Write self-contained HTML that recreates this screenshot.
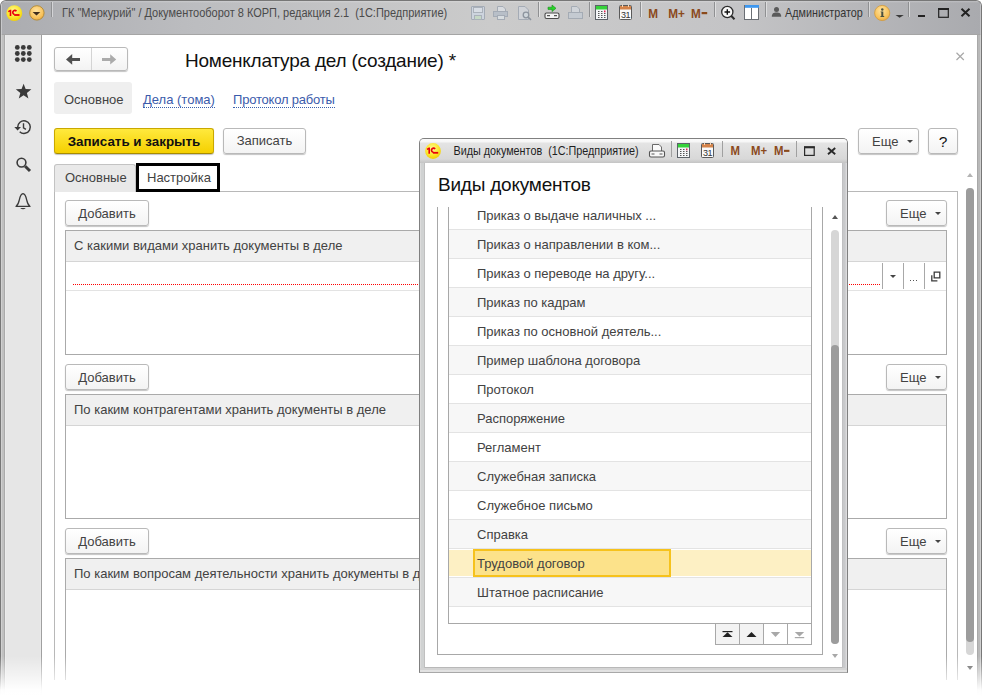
<!DOCTYPE html>
<html><head><meta charset="utf-8">
<style>
*{box-sizing:border-box;margin:0;padding:0}
html,body{width:982px;height:696px;overflow:hidden;background:#fff;font-family:"Liberation Sans",sans-serif;color:#333}
.a{position:absolute}
#win{left:0;top:0;width:982px;height:720px;border:1px solid #777;border-bottom:none;border-radius:6px 6px 0 0;background:linear-gradient(90deg,#d0d0d0 0 1px,#c0c0c0 1px 3px,#aaa 3px 4px,#fff 4px calc(100% - 4px),#a8a8a8 calc(100% - 4px) calc(100% - 3px),#b8b8b8 calc(100% - 3px) calc(100% - 1px),#d0d0d0 calc(100% - 1px));overflow:hidden}
#tb{left:-1px;top:-1px;width:982px;height:35px;background:linear-gradient(#a5a5a5,#a5a5a5) bottom/100% 1px no-repeat,linear-gradient(rgba(255,255,255,.35),rgba(255,255,255,0) 3px),linear-gradient(90deg,#abacb0,#bcbdc0 20%,#cbcbcb 50%,#c4c4c6 75%,#a9aaae);box-shadow:inset 2px 0 0 rgba(255,255,255,.35),inset -2px 0 0 rgba(255,255,255,.3)}
#client{left:4px;top:34px;width:972px;height:700px;background:#fff}
#side{left:0;top:0;width:37px;height:700px;background:#e6e6e6;border-left:1px solid #ececec;border-right:1px solid #a0a0a0;box-shadow:inset -1px 0 0 #eaeaea}
.sep{width:1px;height:16px;top:4px;background:#8e8f92;box-shadow:1px 0 0 #d6d7da}
.tt{font-size:11px;color:#474747;white-space:nowrap}
.btn{border:1px solid #b9b9b9;border-radius:3px;background:linear-gradient(#fff,#f3f3f3);box-shadow:0 1px 1px #c4c4c4;font-size:13px;color:#424242;text-align:center;white-space:nowrap}
.txt{font-size:13px;color:#424242;white-space:nowrap}
.tbl{border:1px solid #aaa;background:#fff}
.thd{background:#f0f0f0;border-bottom:1px solid #d5d5d5}
.tri{width:0;height:0;border-left:3px solid transparent;border-right:3px solid transparent;border-top:3px solid #444}
.lnk{color:#3c61ad;border-bottom:1px dotted #3c61ad}

#dlg{left:419px;top:138px;width:429px;height:535px;border:1px solid #808080;border-bottom-color:#a8a8a8;border-radius:5px 5px 0 0;background:linear-gradient(#b8b8b8,#b8b8b8) 5px 528px/417px 1px no-repeat,linear-gradient(#d4d4d4 0 2px,#e2e2e2 2px 4px) 0 529px/100% 4px no-repeat,linear-gradient(90deg,#dcdcdc 0 1px,#d0d2d2 1px 4px,#c0c0c0 4px 5px,#fff 5px 422px,#c0c0c2 422px 423px,#c8c9cb 423px 425px,#d0d0d2 425px 426px,#dcdcde 426px);overflow:hidden}
#dtb{left:0;top:0;width:427px;height:24px;background:linear-gradient(#fbfbfb 0,#f6f6f6 3px,#e4e4e4 4px,#d8d8d8 20px,#c4c4c4 24px)}
#dcl{left:5px;top:24px;width:417px;height:504px;background:#fff}
#dscroll{left:0;top:44px;width:417px;height:460px;overflow:hidden}
#list{left:23px;top:0;width:364px;height:416px;overflow:hidden;border-left:1px solid #a8a8a8;border-right:1px solid #a8a8a8}
.row{left:0;width:362px;height:29px;border-bottom:1px solid #e3e3e3}
#fade{left:0;top:656px;width:982px;height:40px;background:linear-gradient(rgba(255,255,255,0),rgba(255,255,255,.55) 20px,rgba(255,255,255,.97) 34px,#fff)}
</style></head><body>
<div id="win" class="a">
  <div id="tb" class="a">
  </div>
  <div id="client" class="a">
    <div id="side" class="a"></div>
  </div>
</div>


<!-- title bar items -->
<svg class="a" style="left:0;top:0" width="982" height="34" viewBox="0 0 982 34">
  <defs>
    <radialGradient id="gy" cx="0.45" cy="0.35" r="0.7"><stop offset="0" stop-color="#fffb9a"/><stop offset="0.6" stop-color="#fbe62a"/><stop offset="1" stop-color="#f0c800"/></radialGradient>
    <radialGradient id="go" cx="0.45" cy="0.35" r="0.7"><stop offset="0" stop-color="#ffe3a0"/><stop offset="0.7" stop-color="#f8c25a"/><stop offset="1" stop-color="#e9a640"/></radialGradient>
  </defs>
  <!-- 1C logo -->
  <g id="logo1c">
  <circle cx="14.3" cy="13.2" r="7.9" fill="url(#gy)"/>
  <path d="M8 11 L10.1 9.8 H11.3 V15.9 H9.7 V11.7 L8.5 12.3 Z" fill="#e8000c"/>
  <path d="M16.4 11.2 A2 2 0 1 0 14.6 14.4" fill="none" stroke="#e8000c" stroke-width="1.7"/>
  <rect x="14.2" y="14.1" width="5.3" height="1.8" fill="#e8000c"/>
  </g>
  <!-- dropdown circle -->
  <circle cx="36.9" cy="12.9" r="7.2" fill="url(#go)" stroke="#b58e3c" stroke-width="1"/>
  <path d="M32.6 11.9 H40.3 L36.5 15.6 Z" fill="#3e2c1c"/>
  <!-- separators -->
  <g fill="#8f9092" style="filter:drop-shadow(1px 0 0 rgba(255,255,255,.45))">
    <rect x="51" y="2" width="1" height="15"/>
    <rect x="538" y="2" width="1" height="15"/>
    <rect x="589" y="2" width="1" height="15"/>
    <rect x="640" y="2" width="1" height="15"/>
    <rect x="714" y="2" width="1" height="15"/>
    <rect x="765" y="2" width="1" height="15"/>
    <rect x="868" y="2" width="1" height="15"/>
    <rect x="908" y="2" width="1" height="15"/>
  </g>
  <!-- disabled save -->
  <g stroke="#a4abb5" fill="#cdd4de" stroke-width="1">
    <rect x="471.5" y="6.5" width="13" height="13" rx="0.5"/>
    <rect x="473.5" y="7.5" width="9" height="5" fill="#d8dde4" stroke="#aab1ba"/>
    <rect x="474.5" y="15.5" width="7" height="4" fill="#c5d8c5" stroke="#aab1ba"/>
  </g>
  <!-- disabled print -->
  <g stroke="#a4abb5" fill="#d2d6dc" stroke-width="1">
    <path d="M497.5 6.5 H503 L505.5 9 V11.5 H497.5 Z" fill="#d8dbdf"/>
    <rect x="493.5" y="11.5" width="14" height="5" fill="#b8bfc8"/>
    <rect x="497.5" y="15.5" width="7" height="4" fill="#d8dde0"/>
  </g>
  <!-- disabled preview -->
  <g stroke="#a4abb5" fill="none" stroke-width="1">
    <path d="M518.5 6.5 H525 L528.5 10 V19.5 H518.5 Z" fill="#d0d3d8"/>
    <circle cx="526" cy="15" r="2.8" fill="#cfd6dc" stroke="#8c949e" stroke-width="1.3"/>
    <path d="M528 17 L531 19.8" stroke="#8c949e" stroke-width="1.6"/>
  </g>
  <!-- link with green arrow -->
  <path d="M548 7.2 H552 V5 L556 8.3 L552 11.6 V9.4 H548 Z" fill="#27d42a" stroke="#1a8a1a" stroke-width="0.6"/>
  <rect x="545" y="13" width="14" height="5.5" rx="1.5" fill="#f4f4f4" stroke="#4a4a4a" stroke-width="1.1"/>
  <path d="M547 15.7 H550 M554 15.7 H557" stroke="#555" stroke-width="1.3"/>
  <!-- disabled print to file -->
  <g stroke="#a4abb4" fill="#d0d4d9" stroke-width="1">
    <path d="M571.5 6.5 H577 L579.5 9 V12.5 H571.5 Z"/>
    <rect x="568.5" y="12.5" width="14" height="6" fill="#c4cad1"/>
  </g>
  <!-- calculator -->
  <rect x="595.5" y="5.5" width="12" height="14" fill="#f4f6f8" stroke="#5c6268" stroke-width="1"/>
  <rect x="596" y="6" width="11" height="3.5" fill="#36d23a"/>
  <g fill="#555">
    <rect x="598" y="11" width="1.5" height="1"/><rect x="601" y="11" width="1.5" height="1"/>
    <rect x="598" y="13" width="1.5" height="1"/><rect x="601" y="13" width="1.5" height="1"/><rect x="604" y="13" width="1.5" height="1"/>
    <rect x="598" y="15" width="1.5" height="1"/><rect x="601" y="15" width="1.5" height="1"/><rect x="604" y="15" width="1.5" height="1"/>
    <rect x="598" y="17" width="1.5" height="1"/><rect x="601" y="17" width="1.5" height="1"/><rect x="604" y="17" width="1.5" height="1"/>
  </g>
  <rect x="604" y="10.5" width="1.5" height="1.8" fill="#e82050"/>
  <!-- calendar -->
  <rect x="619.5" y="5.5" width="12" height="14" rx="1" fill="#fafafa" stroke="#5a5a5a" stroke-width="1"/>
  <rect x="620" y="6" width="11" height="3.5" fill="#d4834a"/>
  <rect x="622" y="4.5" width="1" height="2.5" fill="#f0d8c0"/><rect x="628" y="4.5" width="1" height="2.5" fill="#f0d8c0"/>
  <text x="625.6" y="18.2" font-family="Liberation Sans" font-size="9" text-anchor="middle" fill="#333" letter-spacing="-0.3">31</text>
  <!-- M M+ M- -->
  <g font-family="Liberation Sans" font-weight="bold" font-size="12" fill="#8b4a1c">
    <text transform="translate(648.2 17.8) scale(0.98 1.1)">M</text>
    <text transform="translate(668.3 17.8) scale(0.98 1.1)">M+</text>
    <text transform="translate(691 17.8) scale(0.98 1.1)">M</text>
    <rect x="701.6" y="12" width="5.6" height="2.2"/>
  </g>
  <!-- zoom -->
  <circle cx="727.3" cy="12" r="5.6" fill="#f8f8f8" stroke="#2c2c2c" stroke-width="1.3"/>
  <path d="M724.5 12 H730.1 M727.3 9.2 V14.8" stroke="#111" stroke-width="1.4"/>
  <path d="M731.3 16 L734.5 19.2" stroke="#2c2c2c" stroke-width="2"/>
  <!-- panel -->
  <rect x="744.5" y="5.5" width="14" height="14" fill="#fff" stroke="#6a6e74" stroke-width="1"/>
  <rect x="745" y="5" width="14" height="2.8" fill="#3d97ef"/>
  <rect x="751" y="8" width="1" height="11.5" fill="#6a6e74"/>
  <!-- user -->
  <circle cx="776.5" cy="9.6" r="2.5" fill="#5a5a5a"/>
  <path d="M771.8 16.8 C771.8 13.5 773.5 12.6 776.5 12.6 C779.5 12.6 781.2 13.5 781.2 16.8 Z" fill="#5a5a5a"/>
  <text transform="translate(785 16.9) scale(1 1.12)" font-family="Liberation Sans" font-size="10.8" fill="#333">Администратор</text>
  <!-- info -->
  <circle cx="882.2" cy="13" r="7.6" fill="url(#go)" stroke="#d39a3a" stroke-width="0.8"/>
  <circle cx="882.3" cy="9.4" r="1.25" fill="#4a5040"/>
  <path d="M880.6 11.4 H883.3 V16 H884.2 V17 H880.5 V16 H881.3 V12.3 H880.6 Z" fill="#4a5040"/>
  <path d="M895.5 15 H903.8 L899.6 17.8 Z" fill="#3a3a3a"/>
  <!-- window buttons -->
  <rect x="918" y="15" width="7" height="2" fill="#222"/>
  <rect x="938.7" y="8.7" width="9.6" height="8.6" fill="none" stroke="#222" stroke-width="1.2"/>
  <rect x="938" y="8" width="11" height="2" fill="#222"/>
  <path d="M961.5 8.8 L969.5 16.2 M969.5 8.8 L961.5 16.2" stroke="#222" stroke-width="2"/>
  <text transform="translate(62 16.6) scale(1 1.13)" x="0" y="0" font-family="Liberation Sans" font-size="11" fill="#4a4a4a">ГК "Меркурий" / Документооборот 8 КОРП, редакция 2.1&#160; (1С:Предприятие)</text>
</svg>


<!-- sidebar icons -->
<svg class="a" style="left:0;top:34px" width="42" height="190" viewBox="0 34 42 190">
  <g fill="#3a3a3a">
    <circle cx="17.3" cy="47.4" r="2.4"/><circle cx="23.3" cy="47.4" r="2.4"/><circle cx="29.3" cy="47.4" r="2.4"/>
    <circle cx="17.3" cy="53.5" r="2.4"/><circle cx="23.3" cy="53.5" r="2.4"/><circle cx="29.3" cy="53.5" r="2.4"/>
    <circle cx="17.3" cy="59.6" r="2.4"/><circle cx="23.3" cy="59.6" r="2.4"/><circle cx="29.3" cy="59.6" r="2.4"/>
  </g>
  <path d="M23.60 83.70 L25.63 89.11 L31.40 89.37 L26.88 92.97 L28.42 98.53 L23.60 95.35 L18.78 98.53 L20.32 92.97 L15.80 89.37 L21.57 89.11 Z" fill="#3a3a3a"/>
  <!-- history -->
  <path d="M17.7 127.3 A6.3 6.3 0 1 1 19.7 131.7" fill="none" stroke="#3a3a3a" stroke-width="1.5"/>
  <path d="M14.3 127.1 L21 127.1 L17.6 130.6 Z" fill="#3a3a3a"/>
  <path d="M23.5 123.2 V127.8 L25.9 129.4" fill="none" stroke="#3a3a3a" stroke-width="1.4"/>
  <!-- search -->
  <circle cx="21.5" cy="162.6" r="4.4" fill="none" stroke="#3a3a3a" stroke-width="1.6"/>
  <path d="M25.2 166.3 L30 171" stroke="#3a3a3a" stroke-width="3"/>
  <!-- bell -->
  <path d="M23 193.6 C21 193.8 20.1 196.2 19.4 199.6 C18.7 203 17.8 205 16 206.4 H30 C28.2 205 27.3 203 26.6 199.6 C25.9 196.2 25 193.8 23 193.6 Z" fill="none" stroke="#3a3a3a" stroke-width="1.3" stroke-linejoin="round"/>
  <path d="M20.2 208.1 Q23 210.6 25.8 208.1 Z" fill="#3a3a3a"/>
</svg>
<!-- nav arrows -->
<div class="a" style="left:91px;top:48px;width:1px;height:22px;background:#d4d4d4;z-index:2"></div>
<svg class="a" style="left:54px;top:47px;z-index:2" width="74" height="24" viewBox="54 47 74 24">
  <path d="M66 59.4 L72.2 54 V58 H80 V61 H72.2 V64.8 Z" fill="#505050"/>
  <path d="M116.2 59.4 L110.2 54.2 V58 H102 V61 H110.2 V64.6 Z" fill="#ababab"/>
</svg>
<!-- close x main -->
<svg class="a" style="left:954px;top:50px" width="12" height="12" viewBox="954 50 12 12">
  <path d="M956.5 52.8 L963.8 60 M963.8 52.8 L956.5 60" stroke="#a8a8a8" stroke-width="1.2"/>
</svg>
<!-- main scrollbar -->
<div class="a" style="left:967px;top:173px;width:0;height:0;border-left:3px solid transparent;border-right:3px solid transparent;border-bottom:4px solid #b4b4b4"></div>
<div class="a" style="left:966px;top:188px;width:8px;height:467px;border-radius:4px;background:#d6d6d6"></div>
<div class="a" style="left:966px;top:188px;width:8px;height:454px;border-radius:4px;background:#9c9c9c"></div>
<div class="a" style="left:967px;top:666px;width:0;height:0;border-left:3px solid transparent;border-right:3px solid transparent;border-top:4px solid #5a5a5a"></div>

<!-- main form (page coordinates) -->
<div class="a btn" style="left:54px;top:47px;width:74px;height:24px"></div>
<div class="a" style="left:185px;top:50px;font-size:19px;letter-spacing:-0.22px;color:#111;white-space:nowrap">Номенклатура дел (создание) *</div>

<div class="a" style="left:54px;top:82px;width:78px;height:32px;background:#efefef;border-radius:3px"></div>
<div class="a txt" style="left:64px;top:92px">Основное</div>
<div class="a txt lnk" style="left:143px;top:92px;line-height:15px;color:#3b5bab">Дела (тома)</div>
<div class="a txt lnk" style="left:233px;top:92px;line-height:15px;color:#3b5bab;letter-spacing:-0.2px">Протокол работы</div>

<div class="a btn" style="left:54px;top:128px;width:160px;height:26px;background:linear-gradient(#ffe93d,#f5d000);border-color:#c9a800;border-bottom-color:#a88c00;font-weight:bold;color:#111;line-height:25px;font-size:13.4px">Записать и закрыть</div>
<div class="a btn" style="left:223px;top:128px;width:83px;height:26px;line-height:24px">Записать</div>
<div class="a btn" style="left:858px;top:128px;width:61px;height:26px;line-height:25px;text-align:left;padding-left:13px">Еще<span class="a tri" style="left:48px;top:11px"></span></div>
<div class="a btn" style="left:928px;top:128px;width:30px;height:26px;line-height:25px;font-weight:normal;font-size:15.5px;color:#111">?</div>

<!-- tab page -->
<div class="a" style="left:54px;top:191px;width:904px;height:489px;border:1px solid #b8b8b8;border-bottom:none"></div>
<div class="a" style="left:54px;top:164px;width:82px;height:28px;background:#e9e9e9;border:1px solid #c3c3c3;border-bottom:none;border-radius:3px 3px 0 0"></div>
<div class="a txt" style="left:65px;top:170px">Основные</div>
<div class="a" style="left:136px;top:163px;width:84px;height:29px;border:3px solid #000;background:#fff"></div>
<div class="a txt" style="left:147px;top:170px">Настройка</div>


<div class="a btn" style="left:65px;top:200px;width:84px;height:26px;line-height:25px">Добавить</div>
<div class="a btn" style="left:886px;top:200px;width:61px;height:26px;line-height:25px;text-align:left;padding-left:13px">Еще<span class="a tri" style="left:48px;top:11px"></span></div>
<div class="a tbl" style="left:65px;top:230px;width:882px;height:125px"></div>
<div class="a thd" style="left:66px;top:231px;width:880px;height:31px"></div>
<div class="a txt" style="left:74px;top:238px">С какими видами хранить документы в деле</div>

<div class="a btn" style="left:65px;top:364px;width:84px;height:26px;line-height:25px">Добавить</div>
<div class="a btn" style="left:886px;top:364px;width:61px;height:26px;line-height:25px;text-align:left;padding-left:13px">Еще<span class="a tri" style="left:48px;top:11px"></span></div>
<div class="a tbl" style="left:65px;top:394px;width:882px;height:125px"></div>
<div class="a thd" style="left:66px;top:395px;width:880px;height:31px"></div>
<div class="a txt" style="left:74px;top:402px">По каким контрагентами хранить документы в деле</div>

<div class="a btn" style="left:65px;top:528px;width:84px;height:26px;line-height:25px">Добавить</div>
<div class="a btn" style="left:886px;top:528px;width:61px;height:26px;line-height:25px;text-align:left;padding-left:13px">Еще<span class="a tri" style="left:48px;top:11px"></span></div>
<div class="a tbl" style="left:65px;top:558px;width:882px;height:122px;border-bottom:none"></div>
<div class="a thd" style="left:66px;top:559px;width:880px;height:31px"></div>
<div class="a txt" style="left:74px;top:566px">По каким вопросам деятельности хранить документы в деле</div>

<div class="a" style="left:66px;top:290px;width:880px;height:1px;background:#e3e3e3"></div>
<div class="a" style="left:73px;top:284px;width:808px;height:1px;background:repeating-linear-gradient(90deg,#f00 0 1px,transparent 1px 2px)"></div>
<div class="a" style="left:882px;top:263px;width:1px;height:26px;background:#a8a8a8"></div>
<div class="a" style="left:903px;top:263px;width:1px;height:26px;background:#a8a8a8"></div>
<div class="a" style="left:924px;top:263px;width:1px;height:26px;background:#a8a8a8"></div>
<div class="a tri" style="left:890px;top:275px"></div>
<div class="a" style="left:910px;top:280px;width:1px;height:1px;background:#555"></div><div class="a" style="left:913px;top:280px;width:1px;height:1px;background:#555"></div><div class="a" style="left:916px;top:280px;width:1px;height:1px;background:#555"></div>
<svg class="a" style="left:929px;top:270px" width="14" height="14" viewBox="929 270 14 14"><path d="M934.2 272.2h5.6v5.6h-5.6z" fill="none" stroke="#3a3a3a" stroke-width="1.3"/><path d="M931.8 275.2v5.6h5.6" fill="none" stroke="#3a3a3a" stroke-width="1.3"/></svg>


<div id="fade" class="a"></div>
<!-- dialog -->
<div id="dlg" class="a">
  <div class="a" id="dtb"></div>
  <div class="a" id="dcl">
    <div class="a" style="left:13px;top:11px;font-size:19px;letter-spacing:-0.22px;color:#111;white-space:nowrap">Виды документов</div>
    <div class="a" id="dscroll">
      <div class="a" style="left:12px;top:0;width:386px;height:448px;border:1px solid #a8a8a8;border-top:none"></div>
      <div class="a" id="list">
<div class="a row" style="top:-6px;background:#fff"><span class="a txt" style="left:28px;top:7px">Приказ о выдаче наличных ...</span></div>
<div class="a row" style="top:23px;background:#f7f7f7"><span class="a txt" style="left:28px;top:7px">Приказ о направлении в ком...</span></div>
<div class="a row" style="top:52px;background:#fff"><span class="a txt" style="left:28px;top:7px">Приказ о переводе на другу...</span></div>
<div class="a row" style="top:81px;background:#f7f7f7"><span class="a txt" style="left:28px;top:7px">Приказ по кадрам</span></div>
<div class="a row" style="top:110px;background:#fff"><span class="a txt" style="left:28px;top:7px">Приказ по основной деятель...</span></div>
<div class="a row" style="top:139px;background:#f7f7f7"><span class="a txt" style="left:28px;top:7px">Пример шаблона договора</span></div>
<div class="a row" style="top:168px;background:#fff"><span class="a txt" style="left:28px;top:7px">Протокол</span></div>
<div class="a row" style="top:197px;background:#f7f7f7"><span class="a txt" style="left:28px;top:7px">Распоряжение</span></div>
<div class="a row" style="top:226px;background:#fff"><span class="a txt" style="left:28px;top:7px">Регламент</span></div>
<div class="a row" style="top:255px;background:#f7f7f7"><span class="a txt" style="left:28px;top:7px">Служебная записка</span></div>
<div class="a row" style="top:284px;background:#fff"><span class="a txt" style="left:28px;top:7px">Служебное письмо</span></div>
<div class="a row" style="top:313px;background:#f7f7f7"><span class="a txt" style="left:28px;top:7px">Справка</span></div>
<div class="a row" style="top:342px;background:#fdf0c4;box-shadow:inset 0 1px 0 #fff,inset 0 -1px 0 #fff"><span class="a txt" style="left:28px;top:7px">Трудовой договор</span></div>
<div class="a row" style="top:371px;background:#f7f7f7"><span class="a txt" style="left:28px;top:7px">Штатное расписание</span></div>

      </div>
      <div class="a" style="left:290px;top:416px;width:97px;height:22px;border:1px solid #a8a8a8;background:#fff"></div>
      <div class="a" style="left:23px;top:416px;width:364px;height:1px;background:#a8a8a8"></div>
    </div>
  </div>
</div>


<!-- dialog title bar items -->
<svg class="a" style="left:419px;top:138px" width="430" height="26" viewBox="419 138 430 26">
  <use href="#logo1c" transform="translate(418.7 137.8)"/>
  <text transform="translate(453.5 154.6) scale(1 1.13)" x="0" y="0" font-family="Liberation Sans" font-size="10.8" fill="#1e1e1e" xml:space="preserve">Виды документов  (1С:Предприятие)</text>
  <!-- print to file -->
  <path d="M652.5 144.5 H659 L661.5 147 V151.5 H652.5 Z" fill="#fafafa" stroke="#6a6a6a" stroke-width="1"/>
  <rect x="649.5" y="151" width="15" height="6" rx="1.5" fill="#f8f8f8" stroke="#555" stroke-width="1.1"/>
  <path d="M651.5 154 H654.5 M659.5 154 H662.5" stroke="#555" stroke-width="1.2"/>
  <g fill="#a0a0a0">
    <rect x="671" y="141" width="1" height="16"/>
    <rect x="722" y="141" width="1" height="16"/>
    <rect x="796" y="141" width="1" height="16"/>
  </g>
  <!-- calculator -->
  <rect x="677.5" y="143.5" width="12" height="14" fill="#f4f6f8" stroke="#5c6268" stroke-width="1"/>
  <rect x="678" y="144" width="11" height="3.5" fill="#36d23a"/>
  <g fill="#555">
    <rect x="680" y="149" width="1.5" height="1"/><rect x="683" y="149" width="1.5" height="1"/>
    <rect x="680" y="151" width="1.5" height="1"/><rect x="683" y="151" width="1.5" height="1"/><rect x="686" y="151" width="1.5" height="1"/>
    <rect x="680" y="153" width="1.5" height="1"/><rect x="683" y="153" width="1.5" height="1"/><rect x="686" y="153" width="1.5" height="1"/>
    <rect x="680" y="155" width="1.5" height="1"/><rect x="683" y="155" width="1.5" height="1"/><rect x="686" y="155" width="1.5" height="1"/>
  </g>
  <rect x="686" y="148.5" width="1.5" height="1.8" fill="#e82050"/>
  <!-- calendar -->
  <rect x="701.5" y="143.5" width="12" height="14" rx="1" fill="#fafafa" stroke="#5a5a5a" stroke-width="1"/>
  <rect x="702" y="144" width="11" height="3.5" fill="#d4834a"/>
  <rect x="704" y="142.5" width="1" height="2.5" fill="#f0d8c0"/><rect x="710" y="142.5" width="1" height="2.5" fill="#f0d8c0"/>
  <text x="707.6" y="156.2" font-family="Liberation Sans" font-size="9" text-anchor="middle" fill="#333" letter-spacing="-0.3">31</text>
  <g font-family="Liberation Sans" font-weight="bold" font-size="11.6" fill="#8b4a1c">
    <text transform="translate(730.5 155.4) scale(0.98 1.1)">M</text>
    <text transform="translate(751 155.4) scale(0.98 1.1)">M+</text>
    <text transform="translate(774 155.4) scale(0.98 1.1)">M</text>
    <rect x="784" y="149.8" width="5.4" height="2.1"/>
  </g>
  <rect x="804.6" y="147" width="9.6" height="8.4" fill="none" stroke="#2a2a2a" stroke-width="1.2"/>
  <rect x="804" y="146.3" width="10.8" height="2" fill="#2a2a2a"/>
  <path d="M828 148 L835.2 154.2 M835.2 148 L828 154.2" stroke="#2a2a2a" stroke-width="1.9"/>
</svg>
<!-- dialog scrollbar -->
<div class="a" style="left:832px;top:215px;width:0;height:0;border-left:3px solid transparent;border-right:3px solid transparent;border-bottom:4px solid #555"></div>
<div class="a" style="left:831px;top:230px;width:8px;height:414px;border-radius:4px;background:#d6d6d6"></div>
<div class="a" style="left:831px;top:345px;width:8px;height:299px;border-radius:4px;background:#9c9c9c"></div>
<div class="a" style="left:832px;top:654px;width:0;height:0;border-left:3px solid transparent;border-right:3px solid transparent;border-top:4px solid #a8a8a8"></div>
<!-- selected cell -->
<div class="a" style="left:473px;top:549px;width:198px;height:28px;border:2px solid #f6c21c;background:#fce28a"></div>
<div class="a txt" style="left:477px;top:556px">Трудовой договор</div>
<!-- nav box icons -->
<div class="a" style="left:716px;top:624px;width:23px;height:20px;background:#f3f3f3"></div>
<div class="a" style="left:740px;top:624px;width:23px;height:20px;background:#f3f3f3"></div>
<div class="a" style="left:739px;top:624px;width:1px;height:20px;background:#a8a8a8"></div>
<div class="a" style="left:763px;top:624px;width:1px;height:20px;background:#a8a8a8"></div>
<div class="a" style="left:787px;top:624px;width:1px;height:20px;background:#a8a8a8"></div>
<svg class="a" style="left:715px;top:623px" width="97" height="22" viewBox="715 623 97 22">
  <rect x="722.5" y="631" width="10" height="1.2" fill="#222"/>
  <path d="M722.5 637 L727.5 632.3 L732.5 637 Z" fill="#222"/>
  <path d="M746.5 637 L751.5 632 L756.5 637 Z" fill="#222"/>
  <path d="M770.8 632 L775.5 637 L780.2 632 Z" fill="#a8a8a8"/>
  <path d="M794.8 632 L799.5 636.6 L804.2 632 Z" fill="#a8a8a8"/>
  <rect x="794.8" y="637" width="9.4" height="1.2" fill="#a8a8a8"/>
</svg>


</body></html>
